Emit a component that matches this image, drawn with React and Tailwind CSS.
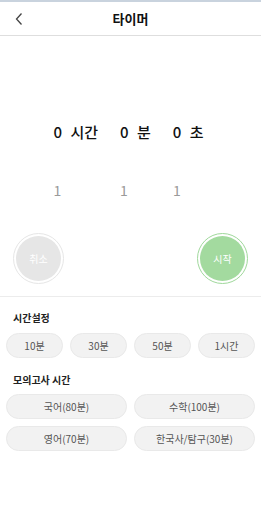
import React from "react";

const font = { fontFamily: '"Noto Sans CJK KR", "Noto Sans", sans-serif' };

function Group({ num, unit }) {
  return (
    <div className="flex flex-col">
      <div className="flex items-center h-[20px] text-[15px] text-[#111] font-medium leading-none">
        <span className="w-[8px] text-center">{num}</span>
        <span className="ml-[9px]">{unit}</span>
      </div>
      <div className="flex mt-[39px] h-[20px] items-center text-[14px] text-[#9a9a9a] leading-none">
        <span className="w-[8px] text-center">1</span>
      </div>
    </div>
  );
}

function Chip({ children }) {
  return (
    <div className="flex-1 h-[25px] rounded-full bg-[#f2f2f2] border border-[#e9e9e9] flex items-center justify-center text-[10px] text-[#555]">
      {children}
    </div>
  );
}

export default function App() {
  return (
    <div style={font} className="w-[261px] h-[512px] bg-white flex flex-col overflow-hidden">
      <div className="h-[2px] bg-[#c9d3de]" />
      <div className="relative h-[34px] border-b border-[#dedede] flex items-center justify-center">
        <svg className="absolute left-[14px] top-[10px]" width="10" height="14" viewBox="0 0 10 14">
          <path d="M7.5 1.5 L2.5 7 L7.5 12.5" fill="none" stroke="#444" strokeWidth="1.3" />
        </svg>
        <span className="text-[13px] font-bold text-[#111]">타이머</span>
      </div>

      <div className="flex justify-center gap-[22px] pr-[4px] mt-[85px]">
        <Group num="0" unit="시간" />
        <Group num="0" unit="분" />
        <Group num="0" unit="초" />
      </div>

      <div className="flex justify-between px-[13px] mt-[33px]">
        <div className="w-[51px] h-[51px] rounded-full border border-[#e6e6e6] p-[2px] bg-white">
          <div className="w-full h-full rounded-full bg-[#e6e6e6] flex items-center justify-center text-[10px] text-white">
            취소
          </div>
        </div>
        <div className="w-[51px] h-[51px] rounded-full border-[1.5px] border-[#9fd89b] p-[2px] bg-white">
          <div className="w-full h-full rounded-full bg-[#a3da9f] flex items-center justify-center text-[10px] text-white">
            시작
          </div>
        </div>
      </div>

      <div className="mt-[12px] h-px bg-[#ececec]" />

      <div className="px-[13px] mt-[13px] text-[10px] font-bold text-[#222] leading-[16px]">시간설정</div>
      <div className="flex gap-[7px] px-[6px] mt-[7px]">
        <Chip>10분</Chip>
        <Chip>30분</Chip>
        <Chip>50분</Chip>
        <Chip>1시간</Chip>
      </div>

      <div className="px-[13px] mt-[14px] text-[10px] font-bold text-[#222] leading-[16px]">모의고사 시간</div>
      <div className="grid grid-cols-2 gap-x-[7px] gap-y-[7px] px-[6px] mt-[6px]">
        <Chip>국어(80분)</Chip>
        <Chip>수학(100분)</Chip>
        <Chip>영어(70분)</Chip>
        <Chip>한국사/탐구(30분)</Chip>
      </div>
    </div>
  );
}
